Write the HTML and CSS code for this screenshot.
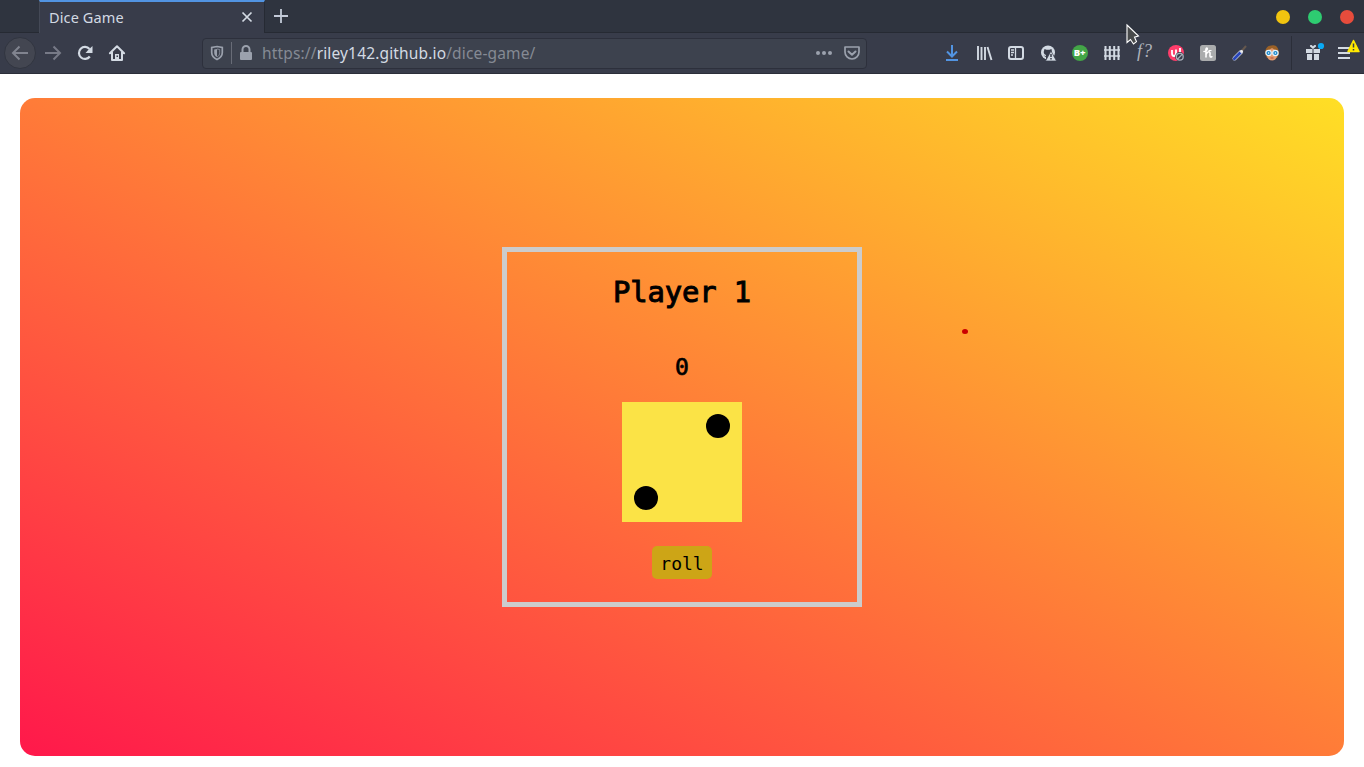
FILE: index.html
```
<!DOCTYPE html>
<html lang="en">
<head>
<meta charset="utf-8">
<title>Dice Game</title>
<link rel="stylesheet" href="styles.css">
</head>
<body>
<header class="browser">
  <div class="tabs">
    <div class="tab">
      <span class="tab-title">Dice Game</span>
      <svg class="tab-close" width="16" height="16" viewBox="0 0 16 16"><path d="M3.500 2.500l9 9M12.500 2.500l-9 9" fill="none" stroke="#d3dae3" stroke-width="1.700"/></svg>
    </div>
    <svg class="new-tab" width="16" height="16" viewBox="0 0 16 16"><path d="M8 1v14M1 8h14" stroke="#c3cad8" stroke-width="1.800"/></svg>
    <div class="window-controls"><i class="control minimize"></i><i class="control maximize"></i><i class="control close"></i></div>
  </div>
  <div class="toolbar">
    <div class="navigation">
      <span class="back"><svg width="16" height="16" viewBox="0 0 16 16"><path d="M16 8H1M7.500 1.500L1 8l6.500 6.500" fill="none" stroke="#81848f" stroke-width="2"/></svg></span>
      <svg width="16" height="16" viewBox="0 0 16 16"><path d="M0 8h15M8.500 1.500L15 8l-6.500 6.500" fill="none" stroke="#777a87" stroke-width="2"/></svg>
      <svg width="16" height="16" viewBox="0 0 16 16"><path d="M12.500 4A6 6 0 1 0 12.800 11.500" fill="none" stroke="#d3dae3" stroke-width="2.200"/><path d="M15.500 1v7H8.500L11 5.200z" fill="#d3dae3"/></svg>
      <svg width="16" height="16" viewBox="0 0 16 16"><path d="M.9 8.200L8 1.200l7.100 7M3 7v8h10V7" fill="none" stroke="#d3dae3" stroke-width="2" stroke-linejoin="round" stroke-linecap="round"/><path d="M6 9h4v6H6z" fill="#d3dae3"/><path d="M7.500 10.500H9V12H7.500z" fill="#383c4a"/></svg>
    </div>
    <div class="address">
      <svg width="14" height="16" viewBox="0 0 14 16"><path d="M7 1.500l5.300 1v5c0 3-2 5.500-5.300 7-3.300-1.500-5.300-4-5.300-7v-5z" fill="none" stroke="#9ba1ad" stroke-width="1.700"/><path d="M7 4v8C5 11 4.200 9.500 4.200 7.500v-3z" fill="#9ba1ad"/><path d="M7 4l2.700.5v3C9.700 9.500 9 11 7 12" fill="none" stroke="#9ba1ad" stroke-width=".7"/></svg>
      <i class="address-line"></i>
      <svg class="lock" width="14" height="16" viewBox="0 0 14 16"><path d="M3.500 8V4.500a3.500 3.500 0 0 1 7 0V8" fill="none" stroke="#9ba1ad" stroke-width="2"/><rect x="1" y="7" width="12" height="8" rx="1" fill="#9ba1ad"/></svg>
      <span class="url">https://<b>riley142.github.io</b>/dice-game/</span>
      <svg class="dots" width="16" height="16" viewBox="0 0 16 16" fill="#9ba1ad"><circle cx="2" cy="8" r="2"/><circle cx="8" cy="8" r="2"/><circle cx="14" cy="8" r="2"/></svg>
      <svg width="16" height="16" viewBox="0 0 16 16" fill="none" stroke="#9ba1ad" stroke-width="1.700" stroke-linejoin="round"><path d="M1 2h14v5a7 7 0 0 1-14 0z"/><path d="M4.500 6.500L8 9.800l3.500-3.300" stroke-width="2" stroke-linecap="round"/></svg>
    </div>
    <div class="extensions">
      <svg viewBox="0 0 16 16"><path d="M8 0v12M3 6.500L8 11.500l5-5M2 15h12" fill="none" stroke="#5294e2" stroke-width="2"/></svg>
      <svg viewBox="0 0 16 16"><path d="M2 1v14M5.500 2v13M9 2v13M11.500 2l4 13" fill="none" stroke="#d3dae3" stroke-width="1.900"/></svg>
      <svg viewBox="0 0 16 16"><rect x="1" y="2" width="14" height="12" rx="2" fill="none" stroke="#d3dae3" stroke-width="2"/><path d="M7.500 2v12M3 5h3M3 7.500h3M3 10h2" stroke="#d3dae3" stroke-width="1.300"/></svg>
      <svg viewBox="0 0 16 16"><circle cx="8" cy="7.500" r="7" fill="#d3dae3"/><path d="M4.500 4l2 .7h3l2-.7.5 3c0 2-1.500 3-3 3.200V14H6v-2L3.500 10.500 6 11v-1C4.500 9.500 3.500 8.500 3.800 6.500z" fill="#383c4a"/><path d="M11 6l5.500 10h-11z" fill="#d3dae3" stroke="#383c4a" stroke-width=".7"/><path d="M11 9v3M11 13v1.500" stroke="#383c4a" stroke-width="1.500"/></svg>
      <svg viewBox="0 0 16 16"><circle cx="8" cy="8" r="8" fill="#43a547"/><text x="1.700" y="11.300" class="badge-text">B+</text></svg>
      <svg viewBox="0 0 16 16"><path d="M1.500 1v14M5.800 1v14M10.200 1v14M14.500 1v14" stroke="#d3dae3" stroke-width="2"/><path d="M0 5h16M0 11h16" stroke="#d3dae3" stroke-width="1.400"/></svg>
      <svg viewBox="0 0 16 16"><text x="1" y="12" class="function-text">f?</text></svg>
      <svg viewBox="0 0 16 16"><circle cx="8" cy="8" r="8" fill="#ff3d6b"/><path d="M4 5v3c0 4 4 4 4 0V4.500M8 8c0 4 4 4 4 0V3" fill="none" stroke="#fff" stroke-width="1.800"/><circle cx="11.800" cy="11.800" r="4.700" fill="#383c4a"/><circle cx="11.800" cy="11.800" r="3.400" fill="none" stroke="#a8adb8" stroke-width="1.300"/><path d="M9.400 14.200l4.800-4.800" stroke="#a8adb8" stroke-width="1.300"/></svg>
      <svg viewBox="0 0 16 16"><rect width="16" height="16" rx="2.500" fill="#aaacad"/><path d="M4 6.500C7 6.500 8 3.300 6.800 3 5.500 3 6 6 6 8.500V12M6 9.500c2-4 4.500-3.500 4 0-.3 2 .3 3 1.800 2.200" fill="none" stroke="#fff" stroke-width="1.600" stroke-linecap="round"/><path d="M8.500 5.500h3" stroke="#fff"/></svg>
      <svg viewBox="0 0 16 16"><path d="M8 8l6-7" stroke="#66584e" stroke-width="2"/><path d="M2.500 13.500L9 7" stroke="#d3dae3" stroke-width="4" stroke-linecap="round"/><path d="M2.300 13.700L8.200 7.800" stroke="#2946bb" stroke-width="2.900" stroke-linecap="round"/><path d="M8.500 7.500l2-2" stroke="#eee" stroke-width="2"/></svg>
      <svg viewBox="0 0 16 16"><path d="M1 9C1 3 4 0 8 .5 12-.5 15 3 15 9l-2 4H3z" fill="#9a6026"/><path d="M3 6l5-3 5 3v5c-1 6-9 6-10 0z" fill="#e19b70"/><circle cx="4.600" cy="8" r="2.700" fill="#1685c9" stroke="#e4f4ff" stroke-width="1.200"/><circle cx="11.400" cy="8" r="2.700" fill="#1685c9" stroke="#e4f4ff" stroke-width="1.200"/><circle cx="4.600" cy="8" r=".8" fill="#fff"/><circle cx="11.400" cy="8" r=".8" fill="#fff"/><path d="M6.500 13h3" stroke="#b34e39"/></svg>
    </div>
    <div class="menu">
      <svg viewBox="0 0 16 16"><path d="M1 4h14v4H1zM2 9h5v6H2zM9 9h5v6H9z" fill="#d3dae3"/><path d="M8 4L5 1.500c-.5-2 2-2 3 0 1-2 3.500-2 3 0z" fill="#d3dae3"/><path d="M8 4v11" stroke="#383c4a"/><circle cx="16" cy="1" r="3.100" fill="#0aaaf5"/></svg>
      <svg viewBox="0 0 16 16"><path d="M1 3h12M1 8h12M1 13h12" stroke="#d3dae3" stroke-width="2"/><path d="M16.500-4.500l5.500 11h-11z" fill="#ffe900" stroke="#ffe900" stroke-width="1.500" stroke-linejoin="round"/><path d="M16.500-1.500v4M16.500 4v1.600" stroke="#383c4a" stroke-width="1.500"/></svg>
    </div>
  </div>
  <svg class="cursor" width="14" height="22" viewBox="0 0 14 22"><path d="M1 1l11.500 11-4 1.200 2 4.500-3 2.300-3-4.500L1 18.500z" fill="#484a4b" stroke="#fff" stroke-width="1.100"/></svg>
</header>
<main class="game">
  <section class="player">
    <h1 class="name">Player 1</h1>
    <p class="score">0</p>
    <div class="die"><i class="pip pip-top"></i><i class="pip pip-bottom"></i></div>
    <button class="roll">roll</button>
  </section>
  <i class="marker"></i>
</main>
</body>
</html>
```
FILE: styles.css
```
* { box-sizing: border-box; }
body { margin: 0; height: 767px; overflow: hidden; background: #fff; font-family: "Noto Sans", sans-serif; }
svg { display: block; flex: none; overflow: visible; }
.browser { position: relative; height: 74px; }
.tabs { height: 33px; display: flex; align-items: center; padding-left: 39px; background: #2f343f; border-bottom: 1px solid #262a33; }
.tab { width: 226px; height: 33px; margin-bottom: -1px; display: flex; align-items: center; justify-content: space-between; padding: 0 9px; color: #d3dae3; background: #383c4a; border-top: 2px solid #5294e2; border-left: 1px solid #444956; border-right: 1px solid #262a33; }
.tab-title { font-size: 14.5px; letter-spacing: .12px; line-height: 20px; padding-bottom: 1px; }
.new-tab { margin-left: 8px; }
.window-controls { display: flex; gap: 18px; margin: 2px 10px 0 auto; }
.control { width: 14px; height: 14px; border-radius: 50%; }
.minimize { background: #f1c40f; }
.maximize { background: #2ecc71; }
.close { background: #e74c3c; }
.toolbar { height: 41px; display: flex; align-items: center; background: #383c4a; border-bottom: 1px solid #2b2e39; }
.navigation { width: 202px; display: flex; align-items: center; gap: 16px; padding-left: 4px; }
.back { width: 32px; height: 32px; margin-right: -7px; display: grid; place-items: center; background: #434651; border: 1px solid #313540; border-radius: 50%; }
.address { width: 665px; height: 31px; display: flex; align-items: center; padding: 0 6px 0 7px; background: #3d424e; border: 1px solid #2d303c; border-radius: 4px; }
.address-line { width: 1px; height: 22px; margin: 0 7px; background: #686c77; }
.url { margin-left: 9px; color: #858a94; font-size: 15.5px; line-height: 22px; letter-spacing: .15px; white-space: nowrap; }
.url b { color: #d3dae3; font-weight: 400; }
.dots { margin: 0 12px 0 auto; }
.extensions { margin-left: 77px; display: flex; gap: 16px; }
.extensions svg, .menu svg { width: 16px; height: 16px; }
.badge-text { fill: #fff; font: 800 9.5px "Open Sans", sans-serif; }
.function-text { fill: #aeb2ba; font: italic 18px "Liberation Serif", serif; letter-spacing: 1px; }
.menu { height: 34px; margin-left: 11px; padding-left: 13px; display: flex; align-items: center; gap: 16px; border-left: 1px solid #2b2e39; }
.cursor { position: absolute; left: 1126px; top: 24px; }
.game { position: relative; height: 658px; margin: 24px 20px 11px; display: grid; place-items: center; background: linear-gradient(to top right, #ff184b, #ffdf25); border-radius: 15px; }
.player { width: 360px; height: 360px; display: flex; flex-direction: column; align-items: center; border: 5px solid #ccc; font-family: "DejaVu Sans Mono", monospace; color: #000; }
.name { margin: 21px 0 0; font-size: 28.8px; line-height: 38px; font-weight: 400; letter-spacing: -.1px; -webkit-text-stroke: 1px #000; }
.score { margin: 40px 0 0; font-size: 23px; line-height: 32px; -webkit-text-stroke: .7px #000; }
.die { width: 120px; height: 120px; margin-top: 19px; padding: 12px; display: grid; grid-template-columns: 1fr 1fr; background: #fbe346; }
.pip { width: 24px; height: 24px; border-radius: 50%; background: #000; }
.pip-top { grid-column: 2; justify-self: end; }
.pip-bottom { grid-column: 1; align-self: end; }
.roll { width: 60px; height: 33px; margin-top: 24px; padding: 2px 0 0; border: 0; border-radius: 5px; background: #cda516; color: #000; font: 18px/28px "DejaVu Sans Mono", monospace; }
.marker { position: absolute; left: 942px; top: 231px; width: 6px; height: 5px; border-radius: 50%; background: #cb0000; }
```
